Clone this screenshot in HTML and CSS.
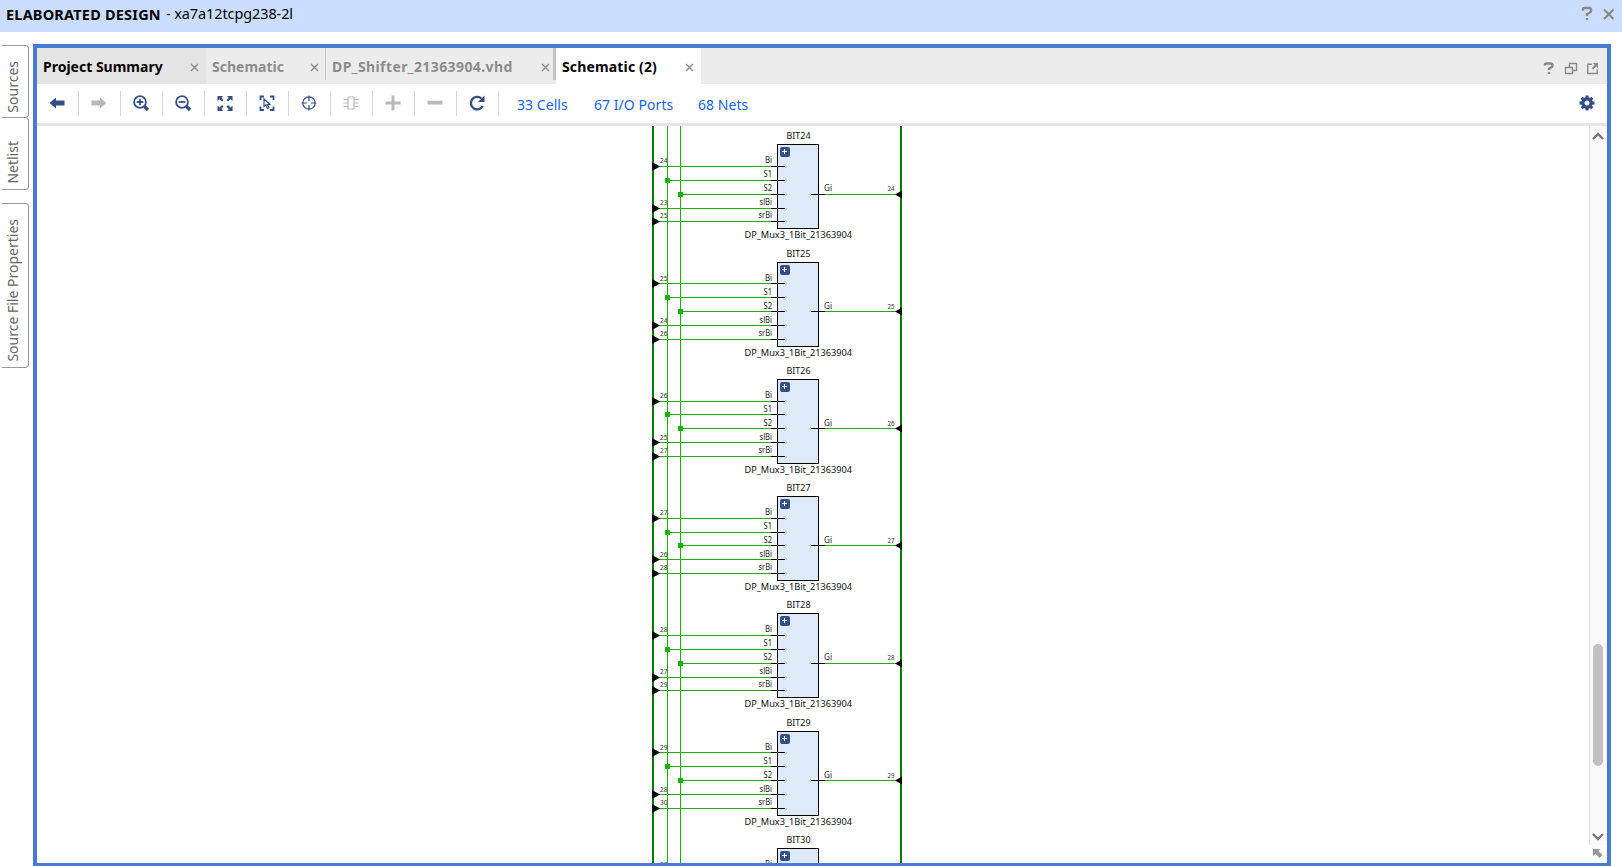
FILE: index.html
```html
<!DOCTYPE html>
<html lang="en">
<head>
<meta charset="utf-8">
<title>Elaborated Design</title>
<link rel="stylesheet" href="styles.css">
</head>
<body>
<header class="titlebar">
  <h1 class="title">ELABORATED DESIGN</h1>
  <span class="part">- xa7a12tcpg238-2l</span>
  <svg class="title-icons" width="40" height="20" viewBox="0 0 40 20">
    <path class="help" d="M6 6.8V5.2Q6 4 7.5 4H12Q14 4 14 5.500V7Q14 8 12.500 8.800L10 10.200V12M10 14V16"/>
    <path class="cross" d="M27 5.500L36.500 15M36.500 5.500L27 15"/>
  </svg>
</header>
<main class="workspace">
  <nav class="rail">
    <div class="rail-tab sources"><span>Sources</span></div>
    <div class="rail-tab netlist"><span>Netlist</span></div>
    <div class="rail-tab properties"><span>Source File Properties</span></div>
  </nav>
  <section class="panel">
    <div class="tabs">
      <div class="tab summary"><span>Project Summary</span><svg class="close" viewBox="0 0 9 9"><path d="M1 1L8 8M8 1L1 8"/></svg></div>
      <div class="tab schematic"><span>Schematic</span><svg class="close" viewBox="0 0 9 9"><path d="M1 1L8 8M8 1L1 8"/></svg></div>
      <div class="tab source"><span>DP_Shifter_21363904.vhd</span><svg class="close" viewBox="0 0 9 9"><path d="M1 1L8 8M8 1L1 8"/></svg></div>
      <div class="tab active"><span>Schematic (2)</span><svg class="close" viewBox="0 0 9 9"><path d="M1 1L8 8M8 1L1 8"/></svg></div>
      <svg class="tab-icons" width="60" height="20" viewBox="0 0 60 20">
        <path class="help" d="M4 6.500V5.500Q4 4.500 5.500 4.500H9.500Q11.500 4.500 11.500 6V7Q11.500 8 10 8.700L8 9.700V11M8 13V15"/>
        <path class="outline" d="M28.500 8V4.500H35.500V11.500H32M24.500 8.500H31.500V14.500H24.500Z"/>
        <path class="outline" d="M51 5.200H46.800V14.500H56.200V10.500"/>
        <path class="fill" d="M52 4H57V9L55.200 7.400L52 10.500L50.700 9.200L53.800 6Z"/>
      </svg>
    </div>
    <div class="toolbar">
      <div class="tool"><svg viewBox="0 0 20 20"><path class="fill" d="M2.500 10L9 4.500V7.500H17.500V12.500H9V15.500Z"/></svg></div>
      <div class="tool off"><svg viewBox="0 0 20 20"><path class="fill" d="M17.500 10L11 4.500V7.500H2.500V12.500H11V15.500Z"/></svg></div>
      <div class="tool"><svg viewBox="0 0 20 20"><circle cx="9" cy="9" r="5.900"/><path d="M5.700 9H12.300M9 5.700V12.300"/><path class="thick" d="M13.500 13.500L17 17"/></svg></div>
      <div class="tool"><svg viewBox="0 0 20 20"><circle cx="9" cy="9" r="5.900"/><path d="M5.700 9H12.300"/><path class="thick" d="M13.500 13.500L17 17"/></svg></div>
      <div class="tool"><svg viewBox="0 0 20 20"><path class="fill" d="M2.500 3H8L6.300 4.800L8.500 7L7 8.500L4.500 6.200L2.500 8ZM17.500 3V8L15.600 6.200L13 8.500L11.500 7L13.800 4.800L12 3ZM2.500 18V12.500L4.500 14.500L7 12L8.500 13.500L6.300 16L8 18ZM17.500 18H12L13.800 16L11.500 13.500L13 12L15.600 14.500L17.500 12.500Z"/></svg></div>
      <div class="tool"><svg viewBox="0 0 20 20"><path d="M3.500 7V3.500H7M13 3.500H16.500V7M16.500 13.500V17H13M7 17H3.500V13.500"/><path class="thin" d="M7 6V13.500L8.800 12L10.600 15.500L12 14.800L10.400 11.500H12.800Z"/></svg></div>
      <div class="tool"><svg viewBox="0 0 20 20"><circle class="thin" cx="10" cy="10" r="6.200"/><path class="thin" d="M10 2.500V8M10 12V17.500M2.500 10H8M12 10H17.500"/></svg></div>
      <div class="tool off"><svg viewBox="0 0 20 20"><path class="thin" d="M7 4H13V16H7ZM2.500 6.500H7M2.500 10H7M2.500 13.500H7M13 6.500H17.500M13 10H17.500M13 13.500H17.500"/></svg></div>
      <div class="tool off"><svg viewBox="0 0 20 20"><path class="fill" d="M8.500 2.500H11.500V8.500H17.500V11.500H11.500V17.500H8.500V11.500H2.500V8.500H8.500Z"/></svg></div>
      <div class="tool off"><svg viewBox="0 0 20 20"><path class="fill" d="M2.500 7.800H17.500V11.500H2.500Z"/></svg></div>
      <div class="tool"><svg viewBox="0 0 20 20"><path class="reload" d="M14.500 5.500A6.300 6.300 0 1 0 15.800 13"/><path class="fill" d="M17.500 2.500V9H11Z"/></svg></div>
      <a class="link cells">33 Cells</a>
      <a class="link ports">67 I/O Ports</a>
      <a class="link nets">68 Nets</a>
      <svg class="gear" viewBox="0 0 20 20"><circle class="ring" cx="10" cy="10" r="4.200"/><path class="teeth" d="M10 2.500V5.500M10 14.500V17.500M2.500 10H5.500M14.500 10H17.500M4.700 4.700L6.700 6.700M13.300 13.300L15.300 15.300M15.300 4.700L13.300 6.700M6.700 13.300L4.700 15.300"/></svg>
    </div>
    <div class="canvas">
      <svg class="diagram" width="1552" height="737" viewBox="37 126 1552 737"></svg>
      <div class="scroll">
        <div class="track">
          <svg class="arrow" viewBox="0 0 14 10"><path d="M2 8L7 3L12 8"/></svg>
          <div class="thumb"></div>
          <svg class="arrow down" viewBox="0 0 14 10"><path d="M2 2L7 7L12 2"/></svg>
        </div>
        <svg class="corner" viewBox="0 0 18 18"><path d="M4 4H11L9.500 6L13.500 10L10.500 13L6.500 9L4 11Z"/></svg>
      </div>
    </div>
  </section>
</main>
<script src="schematic.js"></script>
</body>
</html>
```
FILE: styles.css
```css
* { box-sizing: border-box; }
body {
  margin: 0;
  height: 866px;
  overflow: hidden;
  background: #fff;
  font: 14.5px "Noto Sans", "Open Sans", sans-serif;
  color: #000;
}
svg { display: block; flex: none; }
.titlebar {
  display: flex;
  align-items: center;
  height: 32px;
  padding: 0 5px 5px 6px;
  background: #ccdeff;
  white-space: nowrap;
}
.title { margin: 0; width: 160px; font-size: 14.5px; font-weight: 700; letter-spacing: 0.2px; }
.part { font-size: 14.4px; letter-spacing: -0.05px; }
.title-icons { margin-left: auto; }
.help { fill: none; stroke: #8a8a8a; stroke-width: 2.4; }
.cross { fill: none; stroke: #858585; stroke-width: 2; }
.workspace { display: flex; height: 834px; }
.rail { width: 33px; padding: 13px 4px 0 2px; }
.rail-tab {
  display: flex;
  align-items: center;
  justify-content: center;
  width: 27px;
  border: 1px solid #999;
  border-left: 0;
  border-radius: 0 4px 4px 0;
  color: #666;
  font-size: 14px;
}
.rail-tab span { writing-mode: vertical-rl; transform: rotate(180deg); white-space: nowrap; line-height: 20px; margin-right: 4px; }
.sources { height: 73px; padding-top: 10px; }
.netlist { height: 73px; margin-top: -1px; padding-top: 17px; }
.properties { height: 165px; margin-top: 13px; padding-top: 10px; }
.panel {
  display: flex;
  flex-direction: column;
  width: 1578px;
  height: 822px;
  margin-top: 12px;
  border: 4px solid #4a7bd0;
  border-bottom-width: 3px;
}
.tabs { display: flex; height: 36px; background: #ececec; }
.tab {
  display: flex;
  align-items: center;
  justify-content: space-between;
  padding: 0 6px;
  color: #8c8c8c;
  font-weight: 700;
  font-size: 14px;
  white-space: nowrap;
}
.close { width: 9px; height: 9px; margin-top: 2px; fill: none; stroke: #8c8c8c; stroke-width: 1.4; }
.summary { width: 169px; padding-right: 7px; background: #e4e4e4; color: #000; }
.schematic { width: 119px; }
.source { width: 231px; padding-right: 3px; border-style: solid; border-width: 0 3px 0 1px; border-color: #c4c4c4; border-image: linear-gradient(#c4c4c4 86%, #ececec 86%) 1; }
.source span { letter-spacing: 0.4px; }
.active { width: 145px; padding-right: 7px; background: #fff; color: #000; }
.active span { letter-spacing: 0.15px; }
.tab-icons { margin: 11px 6px 0 auto; }
.outline { fill: none; stroke: #8a8a8a; stroke-width: 1.4; }
.tab-icons .fill { fill: #8a8a8a; }
.toolbar { display: flex; align-items: center; height: 42px; padding-bottom: 1px; border-bottom: 3px solid #e6e6e6; color: #334f86; }
.tool { display: flex; align-items: center; justify-content: center; width: 42px; height: 25px; padding-right: 1px; border-right: 1px solid #d8d8d8; }
.tool svg, .gear { width: 20px; height: 20px; fill: none; stroke: currentColor; stroke-width: 1.8; }
.off { color: #b9b9b9; }
.toolbar .fill { fill: currentColor; stroke: none; }
.tool .thin { stroke-width: 1.2; }
.tool .thick { stroke-width: 3.4; }
.tool .reload { stroke-width: 2.3; }
.link { padding-top: 2px; color: #1a5ff5; font-size: 14px; letter-spacing: 0.05px; white-space: nowrap; }
.cells { width: 77px; margin-left: 18px; }
.ports { width: 104px; }
.gear { margin-left: auto; margin-right: 10px; }
.gear .ring { stroke-width: 3.4; }
.gear .teeth { stroke-width: 3; }
.canvas { display: flex; height: 737px; overflow: hidden; }
.scroll { width: 18px; }
.track { display: flex; flex-direction: column; align-items: center; height: 719px; padding: 5px 1px 3px 0; background: #fafafa; border-left: 1px solid #e0e0e0; }
.arrow { width: 14px; height: 10px; fill: none; stroke: #777; stroke-width: 2.4; }
.thumb { width: 10px; height: 122px; margin: 503px 0 auto; border-radius: 5px; background: #c1c1c1; }
.corner { width: 18px; height: 18px; fill: #979797; }
.diagram { font-family: "Noto Sans", "Open Sans", sans-serif; }
.diagram rect, .diagram line { shape-rendering: crispEdges; }
.diagram .expand { shape-rendering: auto; }
.bus { fill: #007d00; }
.wire { stroke: #19b200; stroke-width: 1; }
.node { fill: #19b200; }
.pin { stroke: #000; stroke-width: 1; }
.cell { fill: #dfeaf8; stroke: #000; stroke-width: 1; }
.expand { fill: #334f86; }
.plus { stroke: #fff; stroke-width: 1; }
.name { font-size: 9.4px; fill: #111; }
.port { font-size: 8px; fill: #222; }
.bit { font-size: 6.5px; fill: #333; }
```
FILE: schematic.js
```js
const svg = document.querySelector('.diagram');

// Each cell: bit number, top edge, rows of the five input wires.
const cells = [
  [24, 144, [166, 180, 194, 208, 221]],
  [25, 262, [283, 297, 311, 325, 339]],
  [26, 379, [401, 414, 428, 442, 456]],
  [27, 496, [518, 532, 545, 559, 573]],
  [28, 613, [635, 649, 663, 677, 690]],
  [29, 731, [752, 766, 780, 794, 808]],
  [30, 848, [870, 883, 897, 911, 925]]
];
const bottom = 863;
const ports = ['Bi', 'S1', 'S2', 'slBi', 'srBi'];
const portWidths = [7, 8.5, 8.5, 12.5, 13.5];
const portOffsets = [19, 33, 47, 61, 74];
const starts = [659, 667, 680, 659, 659];

const line = (cls, x1, y1, x2, y2) =>
  `<line class="${cls}" x1="${x1}" y1="${y1}" x2="${x2}" y2="${y2}"/>`;
// Labels that start below the visible area are skipped.
const text = (cls, x, y, width, value) => y > bottom + 5 ? '' :
  `<text class="${cls}" x="${x}" y="${y}" textLength="${width}" lengthAdjust="spacingAndGlyphs">${value}</text>`;

let out = '<rect class="bus" x="652" y="126" width="2" height="737"/>' +
  '<rect class="bus" x="900" y="126" width="2" height="737"/>' +
  line('wire', 667.5, 126, 667.5, bottom) + line('wire', 680.5, 126, 680.5, bottom);

for (const [bit, top, rows] of cells) {
  out += `<rect class="cell" x="777.5" y="${top + 0.5}" width="41" height="84"/>`;
  out += `<rect class="expand" x="780" y="${top + 3}" width="10" height="10" rx="2"/>`;
  out += line('plus', 782, top + 7.5, 787, top + 7.5) + line('plus', 784.5, top + 5, 784.5, top + 10);
  out += text('name', 786.5, top - 5, 24, 'BIT' + bit);
  out += text('name', 744.5, top + 94, 107.5, 'DP_Mux3_1Bit_21363904');
  const bits = [bit, null, null, bit - 1, bit + 1];
  rows.forEach((row, i) => {
    if (row > bottom + 10) return;
    const y = row + 0.5;
    out += line('wire', starts[i], y, 771, y) + line('pin', 771, y, 785, y);
    out += text('port', 772 - portWidths[i], top + portOffsets[i], portWidths[i], ports[i]);
    if (bits[i] === null) {
      out += `<rect class="node" x="${starts[i] - 2}" y="${row - 2}" width="5" height="5"/>`;
    } else {
      out += `<path d="M652 ${y - 4.5}L660 ${y}L652 ${y + 4.5}Z"/>`;
      out += text('bit', 660, top + portOffsets[i], 7.5, bits[i]);
    }
  });
  const y = rows[2] + 0.5;
  if (y < bottom) {
    out += line('pin', 811, y, 825, y) + line('wire', 825, y, 896, y);
    out += `<path d="M902 ${y - 4}L895 ${y}L902 ${y + 4}Z"/>`;
    out += text('port', 824, top + 47, 8, 'Gi') + text('bit', 887.5, top + 47, 7, bit);
  }
}
svg.innerHTML = out;
```
